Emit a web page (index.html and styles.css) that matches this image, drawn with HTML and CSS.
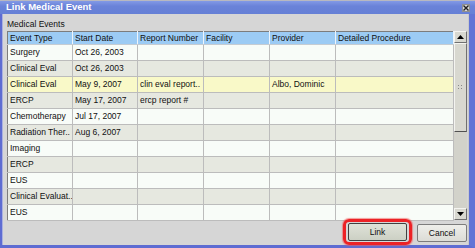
FILE: index.html
```html
<!DOCTYPE html>
<html lang="en">
<head>
    <meta charset="UTF-8">
    <title>Link Medical Event</title>
    <link rel="stylesheet" href="styles.css">
</head>
<body>
    <div class="window">
        <div class="titlebar">
            <span class="title">Link Medical Event</span>
            <span class="close-btn">
                <svg width="6" height="6" viewBox="0 0 6 6"><path d="M0.5 0.5 L5.5 5.5 M5.5 0.5 L0.5 5.5" stroke="#202020" stroke-width="1.4"/></svg>
            </span>
        </div>

        <div class="frame">
            <div class="section-label">Medical Events</div>

            <div class="grid-wrap">
                <table class="grid">
                    <colgroup>
                        <col style="width:65px">
                        <col style="width:65px">
                        <col style="width:66px">
                        <col style="width:66px">
                        <col style="width:66px">
                        <col style="width:118px">
                    </colgroup>
                    <thead>
                        <tr>
                            <th>Event Type</th>
                            <th>Start Date</th>
                            <th>Report Number</th>
                            <th>Facility</th>
                            <th>Provider</th>
                            <th>Detailed Procedure</th>
                        </tr>
                    </thead>
                    <tbody>
                        <tr><td>Surgery</td><td>Oct 26, 2003</td><td></td><td></td><td></td><td></td></tr>
                        <tr><td>Clinical Eval</td><td>Oct 26, 2003</td><td></td><td></td><td></td><td></td></tr>
                        <tr class="selected"><td>Clinical Eval</td><td>May 9, 2007</td><td>clin eval report..</td><td></td><td>Albo, Dominic</td><td></td></tr>
                        <tr><td>ERCP</td><td>May 17, 2007</td><td>ercp report #</td><td></td><td></td><td></td></tr>
                        <tr><td>Chemotherapy</td><td>Jul 17, 2007</td><td></td><td></td><td></td><td></td></tr>
                        <tr><td>Radiation Ther..</td><td>Aug 6, 2007</td><td></td><td></td><td></td><td></td></tr>
                        <tr><td>Imaging</td><td></td><td></td><td></td><td></td><td></td></tr>
                        <tr><td>ERCP</td><td></td><td></td><td></td><td></td><td></td></tr>
                        <tr><td>EUS</td><td></td><td></td><td></td><td></td><td></td></tr>
                        <tr><td>Clinical Evaluat..</td><td></td><td></td><td></td><td></td><td></td></tr>
                        <tr><td>EUS</td><td></td><td></td><td></td><td></td><td></td></tr>
                    </tbody>
                </table>

                <div class="scrollbar">
                    <div class="sb-btn">
                        <svg width="7" height="4" viewBox="0 0 7 4"><polygon points="3.5,0 7,4 0,4" fill="#000"/></svg>
                    </div>
                    <div class="sb-thumb">
                        <svg width="5" height="5" viewBox="0 0 5 5">
                            <rect x="0" y="0" width="1" height="1" fill="#888"/>
                            <rect x="3" y="0" width="1" height="1" fill="#888"/>
                            <rect x="0" y="3" width="1" height="1" fill="#888"/>
                            <rect x="3" y="3" width="1" height="1" fill="#888"/>
                        </svg>
                    </div>
                    <div class="sb-track"></div>
                    <div class="sb-btn">
                        <svg width="7" height="4" viewBox="0 0 7 4"><polygon points="0,0 7,0 3.5,4" fill="#000"/></svg>
                    </div>
                </div>
            </div>

            <div class="footer">
                <span class="highlight">
                    <button class="btn btn-primary">Link</button>
                </span>
                <button class="btn">Cancel</button>
            </div>
        </div>
    </div>
</body>
</html>
```

FILE: styles.css
```css
body {
    margin: 0;
    font-family: 'Liberation Sans', Arial, sans-serif;
    font-size: 8.5px;
    color: #101010;
    background: #d6d6d6;
}

.window {
    width: 475px;
    height: 248px;
    box-sizing: border-box;
    border-top: 1px solid #b8b8c0;
    display: flex;
    flex-direction: column;
    background: #d6d6d6;
}

.titlebar {
    height: 13px;
    flex-shrink: 0;
    display: flex;
    align-items: flex-start;
    justify-content: space-between;
    padding: 0 5px 0 6px;
    background: linear-gradient(#8299e6, #6a82d8 40%, #6680d6);
}

.title {
    color: #fff;
    font-weight: bold;
    font-size: 9.5px;
    line-height: 11px;
}

.close-btn {
    width: 8px;
    height: 8px;
    margin-top: 3px;
    box-sizing: border-box;
    background: #d8d8d8;
    border: 1px solid #909090;
    display: flex;
    align-items: center;
    justify-content: center;
}

.frame {
    flex: 1;
    display: flex;
    flex-direction: column;
    border-left: 2px solid #5e6cd2;
    border-right: 6px solid #6274d6;
    border-bottom: 3px solid #5e6cd2;
    padding: 0 2px 0 5px;
    box-shadow: inset 1px 0 #aab0e0, inset -1px 0 #c8c8cc;
}

.section-label {
    padding-top: 4px;
    line-height: 12px;
    margin-bottom: 1px;
}

.grid-wrap {
    height: 189px;
    display: flex;
    flex-shrink: 0;
}

.grid {
    width: 447px;
    table-layout: fixed;
    border-collapse: collapse;
    border-top: 1px solid #7c7c7c;
    border-left: 1px solid #7c7c7c;
}

.grid th {
    height: 12px;
    line-height: 12px;
    padding: 0 2px;
    font-weight: normal;
    text-align: left;
    background: #9ccbf4;
    border-right: 1px solid #eef4fa;
    border-bottom: 1px solid #c6ccd2;
    white-space: nowrap;
    overflow: hidden;
}

.grid td {
    height: 15px;
    line-height: 15px;
    padding: 0 2px;
    border-right: 1px solid #bcbcbc;
    border-bottom: 1px solid #bcbcbc;
    background: #f8fcf8;
    white-space: nowrap;
    overflow: hidden;
}

.grid tbody tr:nth-child(even) td {
    background: #e6e8e0;
}

.grid tbody tr.selected td {
    background: #f9f9c8;
}

.scrollbar {
    width: 13px;
    display: flex;
    flex-direction: column;
    background: #d4d4cc;
}

.sb-btn {
    height: 12px;
    box-sizing: border-box;
    display: flex;
    align-items: center;
    justify-content: center;
    background: #d8d8d0;
    border: 1px solid;
    border-color: #f4f4f0 #707070 #707070 #f4f4f0;
}

.sb-thumb {
    height: 89px;
    box-sizing: border-box;
    display: flex;
    align-items: center;
    justify-content: center;
    background: #d8d8d0;
    border: 1px solid;
    border-color: #f4f4f0 #707070 #505050 #f4f4f0;
}

.sb-track {
    flex: 1;
    background: #d2d2ca;
}

.footer {
    flex: 1;
    display: flex;
    justify-content: flex-end;
    align-items: center;
    gap: 5px;
}

.highlight {
    display: flex;
    padding: 1px 2px;
    margin-top: -2px;
    border: 3px solid #ec2226;
    border-radius: 6px;
    box-shadow: 0 0 1px 1px rgba(240, 90, 90, 0.6);
}

.btn {
    height: 18px;
    width: 50px;
    padding: 0;
    font-family: inherit;
    font-size: 8.5px;
    color: #101010;
    background: linear-gradient(#eeeeea, #dcdcd6);
    border: 1px solid #7c7c7c;
    border-radius: 2px;
}

.btn-primary {
    width: 59px;
    background: linear-gradient(#dfe2d8, #ccd0c4);
    border-color: #404040;
}
```
